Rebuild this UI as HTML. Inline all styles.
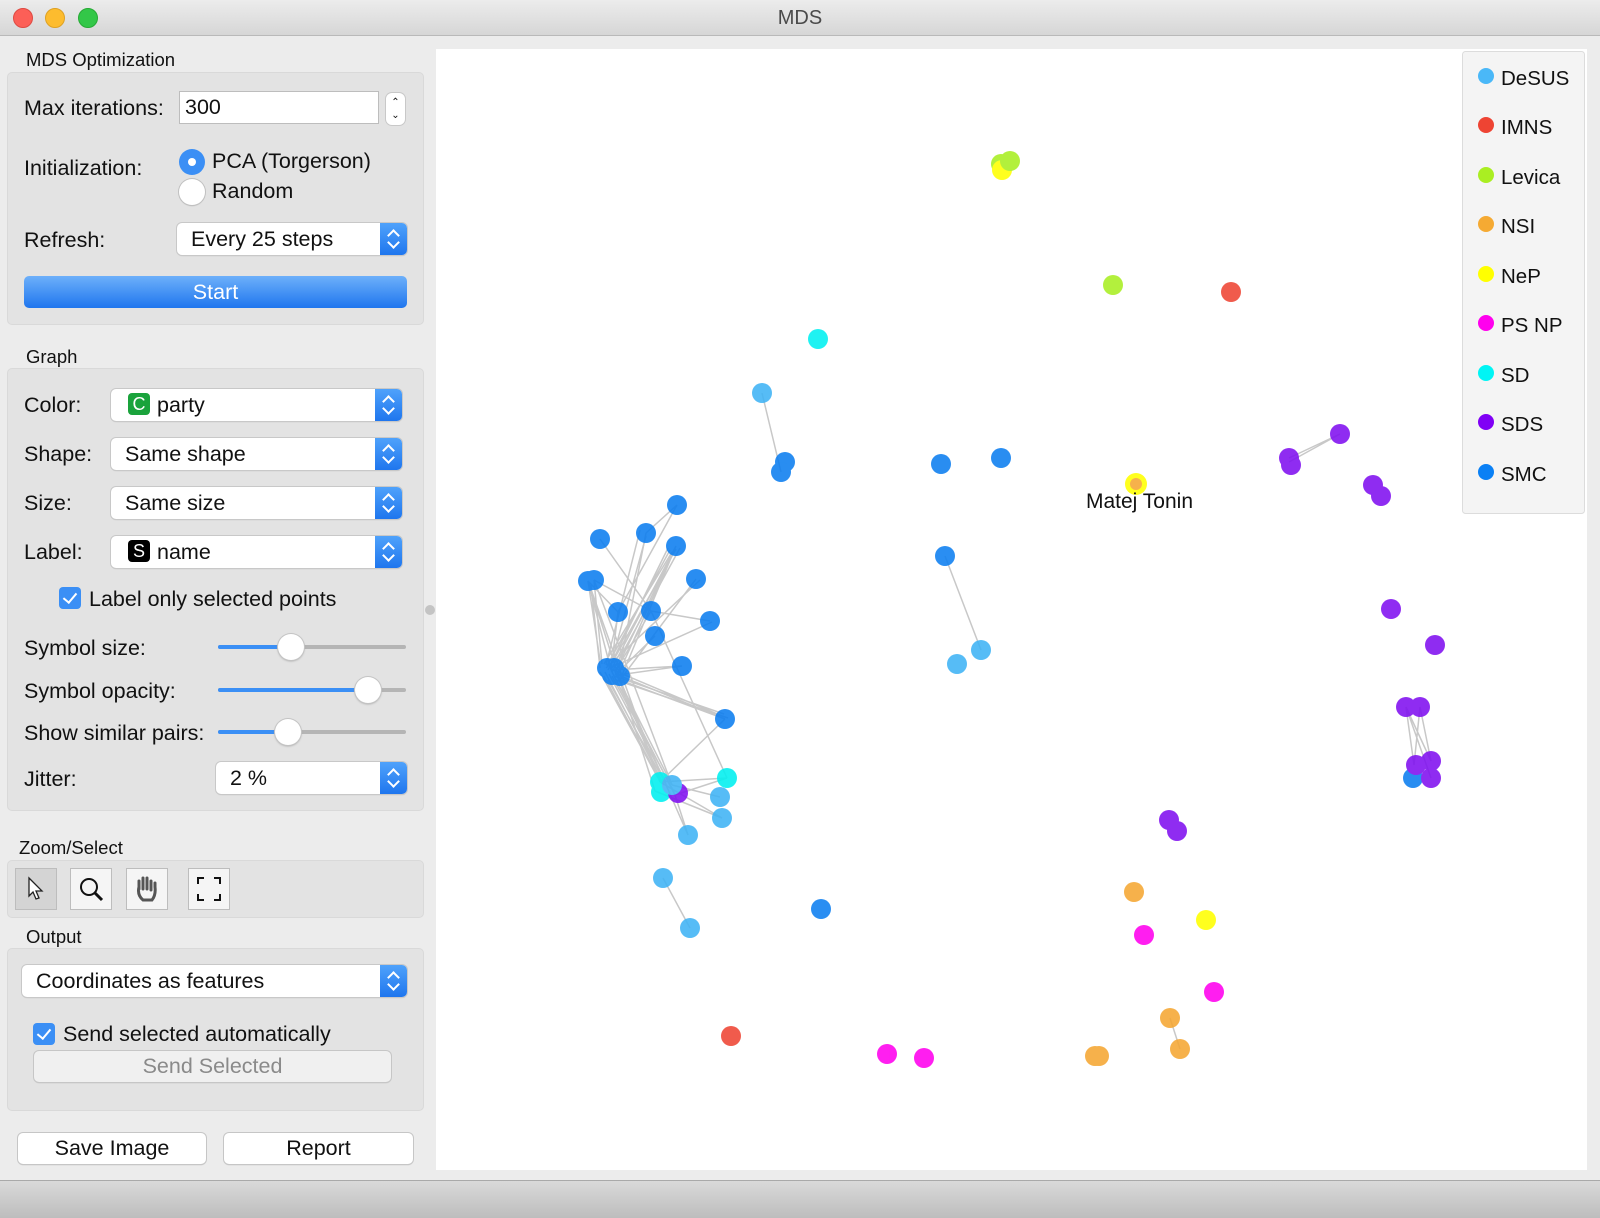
<!DOCTYPE html>
<html><head><meta charset="utf-8"><style>
*{box-sizing:border-box;margin:0;padding:0}
body{width:1600px;height:1218px;background:#ececec;font-family:"Liberation Sans",sans-serif;color:#111;position:relative;overflow:hidden;font-size:21.5px}
.a{position:absolute}
.tb{left:0;top:0;width:1600px;height:36px;background:linear-gradient(#ececec,#d6d6d6);border-bottom:1px solid #b9b9b9}
.dot{width:20px;height:20px;border-radius:50%;top:8px}
.gt{font-size:18.5px}
.box{background:#e3e3e3;border:1px solid #d9d9d9;border-radius:5px}
.lbl{font-size:21.5px;line-height:24px}
.combo{background:#fff;border-radius:5px;box-shadow:0 0 0 1px #c8c8c8,0 1px 1px #bbb;font-size:21.5px;line-height:32px;padding-left:14px}
.combo .arr{position:absolute;right:0;top:0;width:27px;height:100%;background:linear-gradient(#4fa2fb,#1f76ee);border-radius:0 5px 5px 0}
.combo .arr:before,.combo .arr:after{content:"";position:absolute;left:9px;width:7px;height:7px;border:solid #fff;border-width:2px 2px 0 0}
.combo .arr:before{top:8px;transform:rotate(-45deg)}
.combo .arr:after{top:15px;transform:rotate(135deg)}
.btn{background:#fff;border-radius:5px;box-shadow:0 0 0 1px #c6c6c6,0 1px 1px #aaa;text-align:center;font-size:21.5px;line-height:32px}
.chk{width:22px;height:22px;border-radius:4px;background:#3b8ff5}
.chk:after{content:"";position:absolute;left:7px;top:3px;width:6px;height:11px;border:solid #fff;border-width:0 2.5px 2.5px 0;transform:rotate(40deg)}
.trk{height:4px;border-radius:2px;background:#b5b5b5}
.knob{width:26px;height:26px;border-radius:50%;background:#fff;box-shadow:0 0 0 1px #c4c4c4,0 1px 2px #999}
.tool{width:42px;height:42px;background:#f5f5f5;border:1px solid #bdbdbd}
</style></head><body>
<div class="a tb"></div>
<div class="a dot" style="left:13px;background:#fc5f57;border:1px solid #de4a42"></div>
<div class="a dot" style="left:45px;background:#fdbc2e;border:1px solid #dea123"></div>
<div class="a dot" style="left:78px;background:#33c748;border:1px solid #27aa35"></div>
<div class="a" style="left:0;width:1600px;top:7px;text-align:center;font-size:20px;color:#4a4a4a">MDS</div>

<div class="a gt" style="left:26px;top:49px">MDS Optimization</div>
<div class="a box" style="left:7px;top:72px;width:417px;height:253px"></div>
<div class="a lbl" style="left:24px;top:96px">Max iterations:</div>
<div class="a" style="left:179px;top:91px;width:200px;height:33px;background:#fff;border:1px solid #bdbdbd;font-size:21.5px;line-height:31px;padding-left:5px">300</div>
<div class="a" style="left:386px;top:93px;width:19px;height:32px;background:#fff;border-radius:6px;box-shadow:0 0 0 1px #c8c8c8;font-size:10px;text-align:center;line-height:13px;padding-top:3px">&#8963;<br>&#8964;</div>
<div class="a lbl" style="left:24px;top:156px">Initialization:</div>
<div class="a" style="left:179px;top:149px;width:26px;height:26px;border-radius:50%;background:#3b8ff5"></div>
<div class="a" style="left:188px;top:158px;width:8px;height:8px;border-radius:50%;background:#fff"></div>
<div class="a lbl" style="left:212px;top:149px">PCA (Torgerson)</div>
<div class="a" style="left:179px;top:179px;width:26px;height:26px;border-radius:50%;background:#fff;box-shadow:0 0 0 1px #c0c0c0,0 1px 1px #aaa"></div>
<div class="a lbl" style="left:212px;top:179px">Random</div>
<div class="a lbl" style="left:24px;top:228px">Refresh:</div>
<div class="a combo" style="left:177px;top:223px;width:230px;height:32px">Every 25 steps<div class="arr"></div></div>
<div class="a" style="left:24px;top:276px;width:383px;height:32px;border-radius:5px;background:linear-gradient(#6db0fa,#1f76ee);color:#fff;text-align:center;font-size:21.5px;line-height:32px">Start</div>

<div class="a gt" style="left:26px;top:346px">Graph</div>
<div class="a box" style="left:7px;top:368px;width:417px;height:443px"></div>
<div class="a lbl" style="left:24px;top:393px">Color:</div>
<div class="a combo" style="left:111px;top:389px;width:291px;height:32px;padding-left:46px">party<div class="arr"></div></div>
<div class="a" style="left:128px;top:393px;width:22px;height:22px;border-radius:4px;background:#1aa33c;color:#fff;font-size:18px;line-height:22px;text-align:center">C</div>
<div class="a lbl" style="left:24px;top:442px">Shape:</div>
<div class="a combo" style="left:111px;top:438px;width:291px;height:32px">Same shape<div class="arr"></div></div>
<div class="a lbl" style="left:24px;top:491px">Size:</div>
<div class="a combo" style="left:111px;top:487px;width:291px;height:32px">Same size<div class="arr"></div></div>
<div class="a lbl" style="left:24px;top:540px">Label:</div>
<div class="a combo" style="left:111px;top:536px;width:291px;height:32px;padding-left:46px">name<div class="arr"></div></div>
<div class="a" style="left:128px;top:540px;width:22px;height:22px;border-radius:4px;background:#000;color:#fff;font-size:18px;line-height:22px;text-align:center">S</div>
<div class="a chk" style="left:59px;top:587px"></div>
<div class="a lbl" style="left:89px;top:587px">Label only selected points</div>
<div class="a lbl" style="left:24px;top:636px">Symbol size:</div>
<div class="a trk" style="left:218px;top:645px;width:188px"></div>
<div class="a trk" style="left:218px;top:645px;width:72px;background:#3b8ff5"></div>
<div class="a knob" style="left:278px;top:634px"></div>
<div class="a lbl" style="left:24px;top:679px">Symbol opacity:</div>
<div class="a trk" style="left:218px;top:688px;width:188px"></div>
<div class="a trk" style="left:218px;top:688px;width:150px;background:#3b8ff5"></div>
<div class="a knob" style="left:355px;top:677px"></div>
<div class="a lbl" style="left:24px;top:721px">Show similar pairs:</div>
<div class="a trk" style="left:218px;top:730px;width:188px"></div>
<div class="a trk" style="left:218px;top:730px;width:70px;background:#3b8ff5"></div>
<div class="a knob" style="left:275px;top:719px"></div>
<div class="a lbl" style="left:24px;top:767px">Jitter:</div>
<div class="a combo" style="left:216px;top:762px;width:191px;height:32px">2 %<div class="arr"></div></div>
<div class="a" style="left:425px;top:605px;width:10px;height:10px;border-radius:50%;background:#c4c4c4"></div>

<div class="a gt" style="left:19px;top:837px">Zoom/Select</div>
<div class="a box" style="left:7px;top:860px;width:417px;height:58px"></div>
<div class="a tool" style="left:15px;top:868px;background:#d4d4d4"><svg width="40" height="40"><path d="M13 9 L13 27 L17 23 L20 30 L23 29 L20 22 L26 22 Z" fill="#fff" stroke="#222" stroke-width="1.3"/></svg></div>
<div class="a tool" style="left:70px;top:868px"><svg width="40" height="40"><circle cx="18" cy="18" r="8" fill="none" stroke="#111" stroke-width="2"/><path d="M24 24 L31 31" stroke="#111" stroke-width="3"/></svg></div>
<div class="a tool" style="left:126px;top:868px"><svg width="40" height="40"><path d="M12 20 L12 12 M16 20 L16 9 M20 20 L20 9 M24 21 L24 12 M12 18 Q10 26 16 31 L25 31 Q29 26 28 18 L28 14" fill="none" stroke="#555" stroke-width="3" stroke-linecap="round"/></svg></div>
<div class="a tool" style="left:188px;top:868px"><svg width="40" height="40"><path d="M9 15 V9 H15 M25 9 H31 V15 M31 25 V31 H25 M15 31 H9 V25" fill="none" stroke="#111" stroke-width="2"/></svg></div>

<div class="a gt" style="left:26px;top:926px">Output</div>
<div class="a box" style="left:7px;top:948px;width:417px;height:163px"></div>
<div class="a combo" style="left:22px;top:965px;width:385px;height:32px">Coordinates as features<div class="arr"></div></div>
<div class="a chk" style="left:33px;top:1023px"></div>
<div class="a lbl" style="left:63px;top:1022px">Send selected automatically</div>
<div class="a btn" style="left:34px;top:1051px;width:357px;height:31px;background:#f0f0f0;color:#8a8a8a;line-height:31px">Send Selected</div>
<div class="a btn" style="left:18px;top:1133px;width:188px;height:31px;line-height:31px">Save Image</div>
<div class="a btn" style="left:224px;top:1133px;width:189px;height:31px;line-height:31px">Report</div>
<div class="a" style="left:0;top:1180px;width:1600px;height:38px;background:linear-gradient(#d9d9d9,#bdbdbd);border-top:1px solid #a9a9a9"></div>

<svg class="a" style="left:436px;top:49px" width="1151" height="1121" viewBox="436 49 1151 1121">
<rect x="436" y="49" width="1151" height="1121" fill="#fff"/>
<g stroke="#c8c8c8" stroke-width="1.5" fill="none">
<path d="M677 505L618 612M677 505L646 533M600 539L651 611M646 533L618 675M676 546L618 675M676 546L611 670M676 546L620 680M676 546L615 672M588 581L618 612M594 580L651 611M588 581L611 670M588 581L660 782M594 580L672 785M588 581L655 791M651 611L710 621M696 579L620 680M655 636L615 675M618 612L611 670M651 611L615 672M651 611L727 778M682 666L611 670M682 666L618 675M725 719L618 675M725 719L620 680M725 719L660 782M620 680L660 782M615 672L672 785M618 675L655 791M611 670L675 795M620 680L688 835M660 782L727 778M672 785L720 797M655 791L722 818M675 795L727 778M660 782L722 818M675 795L688 835"/>
<path d="M606 665L640 530M610 668L646 536M608 670L676 549M612 672L680 548M606 668L700 580M610 668L712 622M614 676L724 714M616 680L728 718M600 672L658 778M604 676L662 784M608 680L668 788M612 676L674 792M600 660L588 581M602 664L594 580M600 668L591 585M604 664L672 552M607 666L670 550M609 668L668 548M605 672L664 785M609 674L666 782M613 670L722 716"/>
<path d="M762 393L781 472M945 556L981 650M1340 434L1289 462M1340 434L1289 458M1406 707L1414 765M1406 707L1431 778M1420 707L1431 761M1420 707L1414 765M1406 707L1431 761M663 878L690 928M1170 1018L1180 1049"/>
</g>
<g opacity="0.88">
<g fill="#0c7ef0">
<circle cx="677" cy="505" r="10"/><circle cx="600" cy="539" r="10"/><circle cx="646" cy="533" r="10"/><circle cx="676" cy="546" r="10"/><circle cx="588" cy="581" r="10"/><circle cx="594" cy="580" r="10"/><circle cx="618" cy="612" r="10"/><circle cx="651" cy="611" r="10"/><circle cx="696" cy="579" r="10"/><circle cx="710" cy="621" r="10"/><circle cx="655" cy="636" r="10"/><circle cx="607" cy="668" r="10"/><circle cx="614" cy="668" r="10"/><circle cx="620" cy="676" r="10"/><circle cx="612" cy="675" r="10"/><circle cx="682" cy="666" r="10"/><circle cx="725" cy="719" r="10"/>
<circle cx="785" cy="462" r="10"/><circle cx="781" cy="472" r="10"/><circle cx="941" cy="464" r="10"/><circle cx="1001" cy="458" r="10"/><circle cx="945" cy="556" r="10"/><circle cx="821" cy="909" r="10"/><circle cx="1413" cy="778" r="10"/>
</g>
<g fill="#00f0f0"><circle cx="660" cy="782" r="10"/><circle cx="661" cy="792" r="10"/><circle cx="727" cy="778" r="10"/><circle cx="818" cy="339" r="10"/></g>
<g fill="#8010f0"><circle cx="678" cy="793" r="10"/>
<circle cx="1340" cy="434" r="10"/><circle cx="1289" cy="458" r="10"/><circle cx="1291" cy="465" r="10"/><circle cx="1373" cy="485" r="10"/><circle cx="1381" cy="496" r="10"/><circle cx="1391" cy="609" r="10"/><circle cx="1435" cy="645" r="10"/><circle cx="1406" cy="707" r="10"/><circle cx="1420" cy="707" r="10"/><circle cx="1431" cy="761" r="10"/><circle cx="1431" cy="778" r="10"/><circle cx="1416" cy="765" r="10"/><circle cx="1169" cy="820" r="10"/><circle cx="1177" cy="831" r="10"/></g>
<g fill="#3fb3f5"><circle cx="672" cy="785" r="10"/><circle cx="720" cy="797" r="10"/><circle cx="722" cy="818" r="10"/><circle cx="688" cy="835" r="10"/><circle cx="762" cy="393" r="10"/><circle cx="981" cy="650" r="10"/><circle cx="957" cy="664" r="10"/><circle cx="663" cy="878" r="10"/><circle cx="690" cy="928" r="10"/></g>
<g fill="#a8ee22"><circle cx="1001" cy="164" r="10"/><circle cx="1113" cy="285" r="10"/></g>
<g fill="#ffff00"><circle cx="1002" cy="170" r="10"/><circle cx="1206" cy="920" r="10"/><circle cx="1136" cy="484" r="11"/></g>
<g fill="#a8ee22"><circle cx="1010" cy="161" r="10"/></g>
<g fill="#ee4433"><circle cx="1231" cy="292" r="10"/><circle cx="731" cy="1036" r="10"/></g>
<g fill="#f5a733"><circle cx="1136" cy="484" r="6"/><circle cx="1134" cy="892" r="10"/><circle cx="1170" cy="1018" r="10"/><circle cx="1180" cy="1049" r="10"/><circle cx="1095" cy="1056" r="10"/><circle cx="1099" cy="1056" r="10"/></g>
<g fill="#ff00ee"><circle cx="1144" cy="935" r="10"/><circle cx="1214" cy="992" r="10"/><circle cx="887" cy="1054" r="10"/><circle cx="924" cy="1058" r="10"/></g>
</g>
<text x="1086" y="508" font-family="Liberation Sans,sans-serif" font-size="21" fill="#111">Matej Tonin</text>
<rect x="1462.5" y="51.5" width="122" height="462" rx="3" fill="#f4f4f4" stroke="#dcdcdc"/>
<g font-family="Liberation Sans,sans-serif" font-size="20.5" fill="#111">
<circle cx="1486" cy="76" r="8" fill="#4ab8f8"/><text x="1501" y="85">DeSUS</text>
<circle cx="1486" cy="125" r="8" fill="#ee4433"/><text x="1501" y="134">IMNS</text>
<circle cx="1486" cy="175" r="8" fill="#aaee22"/><text x="1501" y="184">Levica</text>
<circle cx="1486" cy="224" r="8" fill="#f5aa33"/><text x="1501" y="233">NSI</text>
<circle cx="1486" cy="274" r="8" fill="#ffff00"/><text x="1501" y="283">NeP</text>
<circle cx="1486" cy="323" r="8" fill="#ff00ee"/><text x="1501" y="332">PS NP</text>
<circle cx="1486" cy="373" r="8" fill="#00f5f5"/><text x="1501" y="382">SD</text>
<circle cx="1486" cy="422" r="8" fill="#8000f5"/><text x="1501" y="431">SDS</text>
<circle cx="1486" cy="472" r="8" fill="#0a80f5"/><text x="1501" y="481">SMC</text>
</g>
</svg>
</body></html>
